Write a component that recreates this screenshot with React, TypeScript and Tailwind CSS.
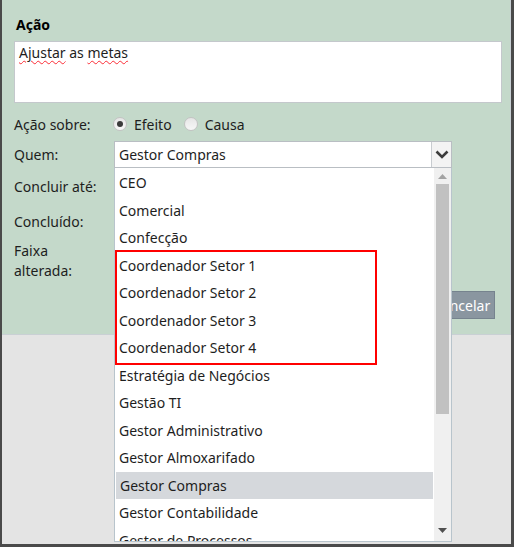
import React from "react"

const OPTIONS = [
  "CEO",
  "Comercial",
  "Confecção",
  "Coordenador Setor 1",
  "Coordenador Setor 2",
  "Coordenador Setor 3",
  "Coordenador Setor 4",
  "Estratégia de Negócios",
  "Gestão TI",
  "Gestor Administrativo",
  "Gestor Almoxarifado",
  "Gestor Compras",
  "Gestor Contabilidade",
  "Gestor de Processos",
]

const SELECTED = "Gestor Compras"

const Radio = ({ checked }: { checked?: boolean }) => (
  <span className="flex h-[14px] w-[14px] items-center justify-center rounded-full border border-[#c3c3c3] bg-gradient-to-b from-[#e6e6e6] to-[#f7f7f7]">
    {checked && <span className="h-[6px] w-[6px] rounded-full bg-[#3a3a3a]" />}
  </span>
)

const App = () => {
  return (
    <div
      className="relative h-[547px] w-[514px] overflow-hidden border-b-[3px] border-l-2 border-r-[3px] border-[#4a4a4a] bg-[#e4e4e4] text-[14px] text-[#1e1e1e]"
      style={{ fontFamily: '"Noto Sans", "Open Sans", sans-serif' }}
    >
      {/* formulário */}
      <div className="flex h-[335px] flex-col border-b border-r border-[#c9d0d4] bg-[#c4d9ca] pl-[12px] pr-[15px] pt-[15px]">
        <h2 className="h-[20px] pl-[2px] font-bold leading-[20px] text-black">Ação</h2>
        <div className="mt-[6px] h-[62px] w-[488px] border border-[#c4c8cc] bg-white px-[4px] pt-[1px] leading-[20px]">
          <span className="underline decoration-red-500 decoration-wavy decoration-1 underline-offset-2">Ajustar</span>{" "}
          as{" "}
          <span className="underline decoration-red-500 decoration-wavy decoration-1 underline-offset-2">metas</span>
        </div>

        <div className="mt-[7px] flex h-[28px] items-center">
          <span className="w-[99px]">Ação sobre:</span>
          <label className="flex items-center gap-[7px]">
            <Radio checked />
            <span>Efeito</span>
          </label>
          <label className="ml-[12px] flex items-center gap-[7px]">
            <Radio />
            <span>Causa</span>
          </label>
        </div>

        <div className="mt-[3px] flex h-[26px] items-center">Quem:</div>
        <div className="mt-[7px] flex h-[24px] items-center">Concluir até:</div>
        <div className="mt-[11px] flex h-[24px] items-center">Concluído:</div>
        <div className="mt-[8px] leading-[20px]">
          Faixa
          <br />
          alterada:
        </div>

        <div className="mt-[10px] flex justify-end gap-2">
          <button className="h-[28px] border border-[#76838e] bg-[#8a96a0] px-[10px] text-white">Salvar</button>
          <button className="h-[28px] w-[76px] border border-[#76838e] bg-[#8a96a0] pl-[13px] text-left text-white">
            Cancelar
          </button>
        </div>
      </div>

      {/* select aberto */}
      <div className="absolute left-[112px] top-[141px] w-[338px]">
        <div className="flex h-[27px] items-center border border-[#b9bec3] bg-white">
          <span className="flex-1 pl-[4px]">{SELECTED}</span>
          <span className="flex h-full w-[20px] items-center justify-center border-l border-[#c8ccd0] bg-[#f3f3f3]">
            <svg width="14" height="9" viewBox="0 0 14 9">
              <path d="M1.5 1.5 L7 7 L12.5 1.5" fill="none" stroke="#3c3c3c" strokeWidth="2.6" />
            </svg>
          </span>
        </div>
        <div className="relative flex h-[374px] overflow-hidden border border-t-0 border-[#b8c4cc] bg-white">
          <ul className="flex-1 pt-[1px]">
            {OPTIONS.map((opt) => (
              <li
                key={opt}
                className={`flex h-[27.5px] items-center pl-[4px] ${
                  opt === SELECTED ? "mx-[1px] bg-[#d5d8dc] pl-[3px]" : ""
                }`}
              >
                {opt}
              </li>
            ))}
          </ul>
          <div className="flex w-[17px] flex-col items-center bg-[#f0f0f0]">
            <svg width="9" height="5" viewBox="0 0 9 5" className="mt-[6px]">
              <path d="M0 5 L4.5 0 L9 5 Z" fill="#a3a3a3" />
            </svg>
            <div className="mt-[5px] h-[230px] w-[13px] bg-[#c1c1c1]" />
            <div className="flex-1" />
            <svg width="9" height="5" viewBox="0 0 9 5" className="mb-[8px]">
              <path d="M0 0 L9 0 L4.5 5 Z" fill="#505050" />
            </svg>
          </div>
          <div className="pointer-events-none absolute left-[0px] top-[82px] h-[115px] w-[262px] border-2 border-[#ff0000]" />
        </div>
      </div>
    </div>
  )
}

export default App
